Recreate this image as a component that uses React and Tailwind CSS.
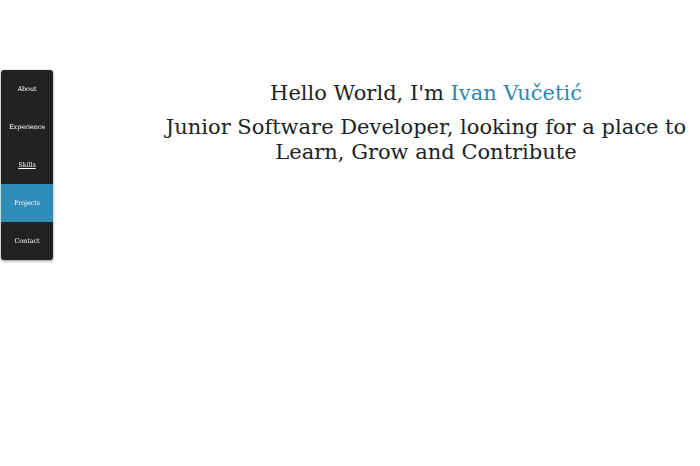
const items = [
  { id: "about", label: "About" },
  { id: "experience", label: "Experience" },
  { id: "skills", label: "Skills" },
  { id: "projects", label: "Projects" },
  { id: "contact", label: "Contact" },
];

const App = () => {
  const active = "projects";
  const slab = { fontFamily: '"DejaVu Serif", "Liberation Serif", serif' };

  return (
    <div className="min-h-[466px] w-[700px] bg-white relative" style={slab}>
      {/* Side nav */}
      <nav className="fixed left-[1px] top-[70px] w-[52px] bg-[#222222] rounded-[3px] shadow-[0_1px_3px_rgba(0,0,0,0.45)] overflow-hidden">
        {items.map((item) => (
          <a
            key={item.id}
            href={`#${item.id}`}
            className={`h-[38px] pt-[1px] flex items-center justify-center text-[6.5px] tracking-[-0.1px] text-white ${
              item.id === active ? "bg-[#2f8bb8]" : ""
            } ${item.id === "skills" ? "underline" : ""}`}
          >
            {item.label}
          </a>
        ))}
      </nav>

      {/* Hero */}
      <main className="ml-[152px] pt-[79px] text-center text-[#222222]">
        <h1 className="text-[21px] leading-[28px]">
          Hello World, I'm <span className="text-[#2f86ad]">Ivan Vučetić</span>
        </h1>
        <h2 className="mt-[8px] text-[21px] leading-[25px]">
          Junior Software Developer, looking for a place to
          <br />
          Learn, Grow and Contribute
        </h2>
      </main>
    </div>
  );
};

export default App;
